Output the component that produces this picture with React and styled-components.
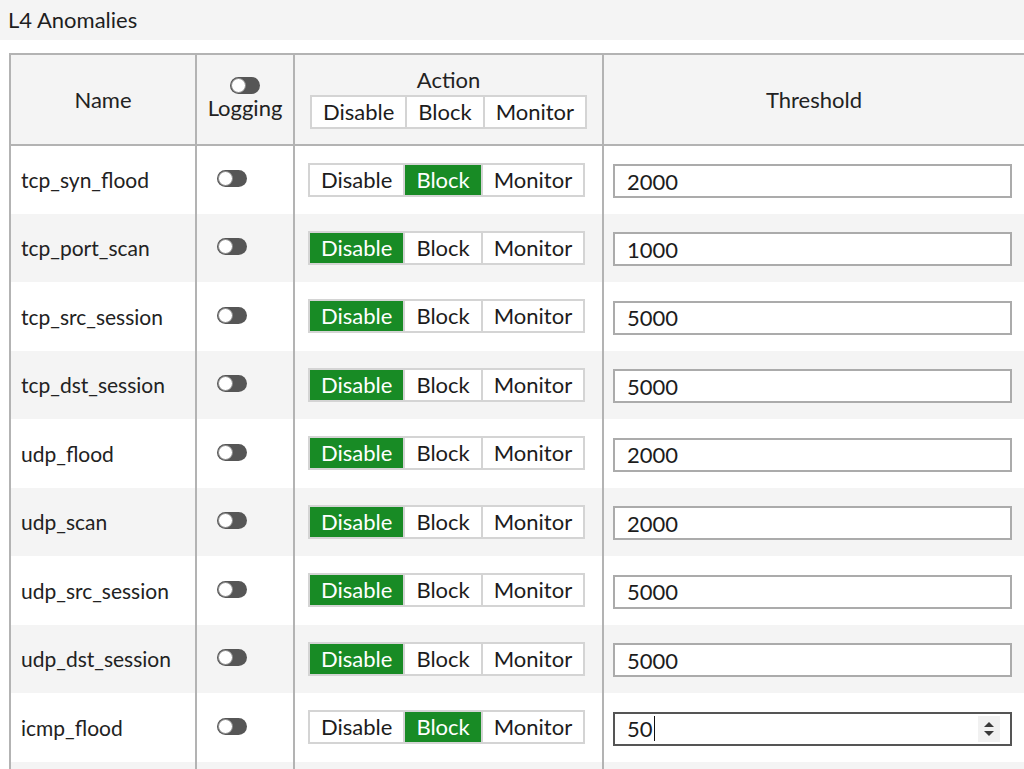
import React from 'react';
import styled, { createGlobalStyle } from 'styled-components';

const GlobalStyle = createGlobalStyle`
    html, body {
        margin: 0;
        padding: 0;
        background: #ffffff;
        overflow: hidden;
    }
    body {
        font-family: Lato, "Open Sans", "Liberation Sans", sans-serif;
        color: #222222;
    }
`;

const Page = styled.div`
    display: flex;
    flex-flow: column nowrap;
    width: 1024px;
    height: 769px;
    overflow: hidden;
`;

const TitleBar = styled.div`
    display: flex;
    align-items: center;
    flex-shrink: 0;
    height: 40px;
    padding: 0 8px 2px;
    background: #f4f4f4;
    font-size: 22px;
    color: #1e1e1e;
    box-sizing: border-box;
`;

const TableWrapper = styled.div`
    flex-shrink: 0;
    padding: 13px 0 0 9px;
`;

const Table = styled.table`
    border-collapse: collapse;
    table-layout: fixed;
    width: 1017px;
    font-size: 22px;
`;

const HeadCell = styled.th`
    width: ${p => (p.$width ? `${p.$width}px` : 'auto')};
    height: 89px;
    padding: 0;
    border: 2px solid #b3b3b3;
    background: #f4f4f4;
    font-weight: 400;
    text-align: center;
    vertical-align: middle;
    color: #222;
`;

const HeadStack = styled.div`
    display: flex;
    flex-flow: column nowrap;
    align-items: center;
    gap: ${p => p.$gap || 0}px;
    margin-top: ${p => p.$offset || 0}px;
`;

const Row = styled.tr`
    height: 68.5px;
    background: ${p => (p.$shade ? '#f4f4f4' : '#ffffff')};
`;

const Cell = styled.td`
    padding: 0 ${p => p.$pad || 0}px;
    border-left: 2px solid #b3b3b3;
    border-right: 2px solid #b3b3b3;
    vertical-align: middle;
    text-align: left;
    white-space: nowrap;
    font-size: ${p => p.$size || 22}px;
`;

const ToggleTrack = styled.span`
    position: relative;
    display: block;
    flex-shrink: 0;
    width: 30px;
    height: 17px;
    margin-top: ${p => p.$lift || 0}px;
    border-radius: 9px;
    background: #565656;

    &::after {
        content: '';
        position: absolute;
        left: 1px;
        top: 1px;
        width: 13px;
        height: 13px;
        border-radius: 50%;
        background: #ffffff;
        border: 1px solid #8a8a8a;
    }
`;

const SegmentGroup = styled.div`
    display: flex;
    flex-flow: row nowrap;
    width: max-content;
    height: 34px;
    border: 2px solid #d4d4d4;
    box-sizing: border-box;
    background: #ffffff;
`;

const Segment = styled.span`
    display: flex;
    align-items: center;
    padding: 0 11px;
    line-height: 30px;
    font-size: 22px;
    color: ${p => (p.$active ? '#ffffff' : '#1c1c1c')};
    background: ${p => (p.$active ? '#188b25' : 'transparent')};
    & + & {
        border-left: 2px solid #d4d4d4;
    }
`;

const ThresholdInput = styled.input`
    display: block;
    width: 399px;
    height: 34px;
    margin-top: 3px;
    padding: 0 12px;
    box-sizing: border-box;
    border: 2px solid #ababab;
    background: #ffffff;
    font-family: inherit;
    font-size: 22px;
    color: #1c1c1c;
    outline: none;
`;

const FocusedField = styled.div`
    display: flex;
    align-items: center;
    width: 399px;
    height: 34px;
    margin-top: 3px;
    padding: 0 10px 0 12px;
    box-sizing: border-box;
    border: 2px solid #555555;
    background: #ffffff;
    font-size: 22px;
    color: #1c1c1c;
`;

const Caret = styled.span`
    display: inline-block;
    width: 1px;
    height: 25px;
    margin-left: 1px;
    background: #111;
`;

const Spinner = styled.span`
    display: flex;
    align-items: center;
    justify-content: center;
    margin-left: auto;
    width: 22px;
    height: 26px;
    background: #f1f1f1;
`;

const actions = ['Disable', 'Block', 'Monitor'];

const rows = [
    { name: 'tcp_syn_flood', action: 'Block', threshold: '2000' },
    { name: 'tcp_port_scan', action: 'Disable', threshold: '1000' },
    { name: 'tcp_src_session', action: 'Disable', threshold: '5000' },
    { name: 'tcp_dst_session', action: 'Disable', threshold: '5000' },
    { name: 'udp_flood', action: 'Disable', threshold: '2000' },
    { name: 'udp_scan', action: 'Disable', threshold: '2000' },
    { name: 'udp_src_session', action: 'Disable', threshold: '5000' },
    { name: 'udp_dst_session', action: 'Disable', threshold: '5000' },
    { name: 'icmp_flood', action: 'Block', threshold: '50', focused: true },
];

function ActionPicker({ value }) {
    return (
        <SegmentGroup>
            {actions.map(a => (
                <Segment key={a} $active={a === value}>{a}</Segment>
            ))}
        </SegmentGroup>
    );
}

function SpinIcon() {
    return (
        <svg width="12" height="18" viewBox="0 0 12 18">
            <path d="M6 2 L11 7 L1 7 Z" fill="#3a3a3a" />
            <path d="M1 11 L11 11 L6 16 Z" fill="#3a3a3a" />
        </svg>
    );
}

export default function App() {
    return (
        <Page>
            <GlobalStyle />
            <TitleBar>L4 Anomalies</TitleBar>
            <TableWrapper>
                <Table>
                    <thead>
                        <tr>
                            <HeadCell $width={184}>Name</HeadCell>
                            <HeadCell $width={96}>
                                <HeadStack $offset={-2}>
                                    <ToggleTrack />
                                    <span>Logging</span>
                                </HeadStack>
                            </HeadCell>
                            <HeadCell $width={307}>
                                <HeadStack $offset={-4} $gap={2}>
                                    <span>Action</span>
                                    <ActionPicker value={null} />
                                </HeadStack>
                            </HeadCell>
                            <HeadCell>Threshold</HeadCell>
                        </tr>
                    </thead>
                    <tbody>
                        {rows.map((r, i) => (
                            <Row key={r.name} $shade={i % 2 === 1}>
                                <Cell $pad={10} $size={21}>{r.name}</Cell>
                                <Cell $pad={20}><ToggleTrack $lift={-2} /></Cell>
                                <Cell $pad={13}><ActionPicker value={r.action} /></Cell>
                                <Cell $pad={9}>
                                    {r.focused ? (
                                        <FocusedField>
                                            {r.threshold}
                                            <Caret />
                                            <Spinner><SpinIcon /></Spinner>
                                        </FocusedField>
                                    ) : (
                                        <ThresholdInput type="text" defaultValue={r.threshold} />
                                    )}
                                </Cell>
                            </Row>
                        ))}
                        <Row $shade>
                            <Cell />
                            <Cell />
                            <Cell />
                            <Cell />
                        </Row>
                    </tbody>
                </Table>
            </TableWrapper>
        </Page>
    );
}
